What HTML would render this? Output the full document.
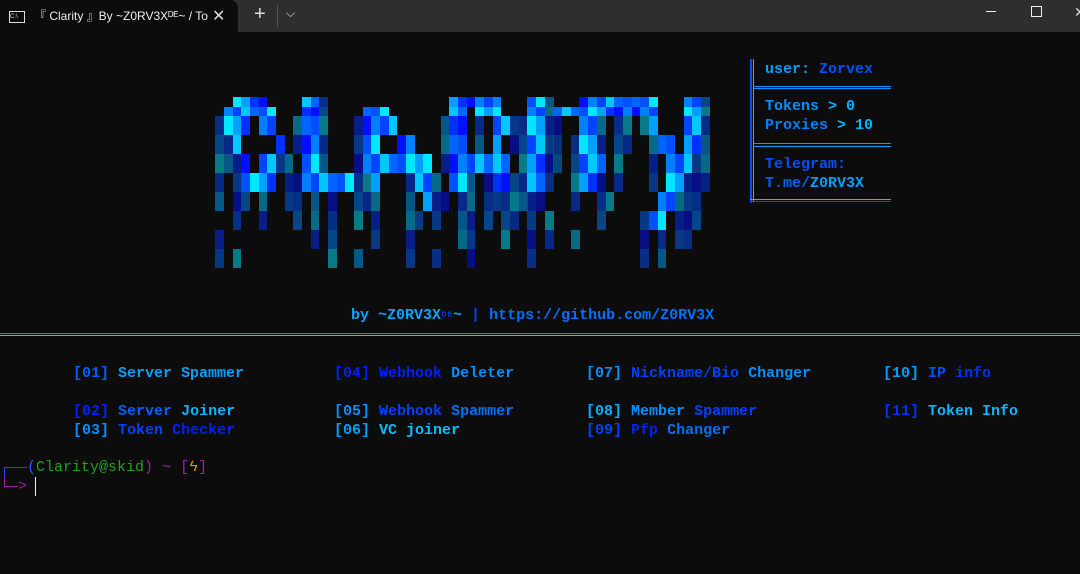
<!DOCTYPE html>
<html><head><meta charset="utf-8"><style>
body{margin:0;width:1080px;height:574px;background:#0c0c0c;overflow:hidden;font-family:"Liberation Mono",monospace;font-size:15px;font-weight:bold;position:relative}
.tb{position:absolute;left:0;top:0;width:1080px;height:32px;background:#2e2e2e}
.tab{position:absolute;left:0;top:0;width:238px;height:32px;background:#0c0c0c;border-radius:0 8px 0 0}
.t{position:absolute;white-space:pre;line-height:19px}
.c{position:absolute}
</style></head><body>
<div class="tb"><div class="tab"></div>
<div style="position:absolute;left:9px;top:11px;width:14px;height:10px;border:1px solid #ddd;font:6px 'Liberation Sans';color:#ddd;line-height:10px">C:\</div>
<div class="t" style="left:34px;top:7px;font:12px 'Liberation Sans',sans-serif;color:#eee">『 Clarity 』By ~Z0RV3Xᴰᴱ~ / To</div>
<div class="t" style="left:212px;top:6px;font:16px 'Liberation Sans';color:#ddd">✕</div>
<div class="t" style="left:254px;top:3px;font:20px 'Liberation Sans';color:#ddd;font-weight:normal">+</div>
<div style="position:absolute;left:277px;top:5px;width:1px;height:22px;background:#555"></div>
<div class="t" style="left:286px;top:6px;font:12px 'Liberation Sans';color:#ddd">⌵</div>
<div style="position:absolute;left:986px;top:11px;width:10px;height:1px;background:#eee"></div>
<div style="position:absolute;left:1031px;top:6px;width:9px;height:9px;border:1px solid #eee"></div>
<div class="t" style="left:1074px;top:4px;font:14px 'Liberation Sans';color:#ddd">✕</div>
</div>
<div id="logo"></div>
<div style="position:absolute;left:750px;top:59px;width:2px;height:144px;background:#0050ff"></div>
<div style="position:absolute;left:753px;top:59px;width:1px;height:142px;background:#00c8ff"></div>
<div style="position:absolute;left:753px;top:86px;width:138px;height:1px;background:#0090ff"></div>
<div style="position:absolute;left:753px;top:88px;width:138px;height:1px;background:#0090ff"></div>
<div style="position:absolute;left:753px;top:143px;width:138px;height:1px;background:#00a0ff"></div>
<div style="position:absolute;left:753px;top:146px;width:138px;height:1px;background:#00a0ff"></div>
<div style="position:absolute;left:750px;top:199px;width:141px;height:1px;background:#00c8ff"></div>
<div style="position:absolute;left:750px;top:201px;width:141px;height:1px;background:#0050ff"></div>
<div class="t" style="left:765px;top:60px"><span style="color:#00a0ff">user: </span><span style="color:#0050ff">Zorvex</span></div>
<div class="t" style="left:765px;top:97px;color:#0090ff">Tokens <span style="color:#00b0ff">&gt; 0</span></div>
<div class="t" style="left:765px;top:116px;color:#0080ff">Proxies <span style="color:#00b8ff">&gt; 10</span></div>
<div class="t" style="left:765px;top:155px;color:#0050ff">Telegram:</div>
<div class="t" style="left:765px;top:174px;color:#0060ff">T.me/<span style="color:#00a0ff">Z0RV3X</span></div>
<div class="t" style="left:351px;top:306px;color:#00a8ff">by ~Z0RV3X<span style="color:#0040ff;font-size:10px">ᴰᴱ</span>~ <span style="color:#0040ff">|</span> <span style="color:#0070ff">https://github.com/Z0RV3X</span></div>
<div style="position:absolute;left:0;top:333px;width:1080px;height:1px;background:#2080ff"></div>
<div style="position:absolute;left:0;top:335px;width:1080px;height:1px;background:#40c0ff"></div>
<div class="t" style="left:73px;top:364px"><span style="color:#0060ff">[01]</span> <span style="color:#00a0ff">Server Spammer</span></div>
<div class="t" style="left:73px;top:402px"><span style="color:#0020ff">[02]</span> <span style="color:#0060ff">Server</span> <span style="color:#00b8ff">Joiner</span></div>
<div class="t" style="left:73px;top:421px"><span style="color:#0090ff">[03]</span> <span style="color:#0040ff">Token</span> <span style="color:#0020ff">Checker</span></div>
<div class="t" style="left:334px;top:364px"><span style="color:#0020ff">[04]</span> <span style="color:#0020ff">Webhook</span> <span style="color:#0090ff">Deleter</span></div>
<div class="t" style="left:334px;top:402px"><span style="color:#0090ff">[05]</span> <span style="color:#0040ff">Webhook</span> <span style="color:#0070ff">Spammer</span></div>
<div class="t" style="left:334px;top:421px"><span style="color:#00a0ff">[06]</span> <span style="color:#00c0ff">VC joiner</span></div>
<div class="t" style="left:586px;top:364px"><span style="color:#0090ff">[07]</span> <span style="color:#0040ff">Nickname/Bio</span> <span style="color:#0090ff">Changer</span></div>
<div class="t" style="left:586px;top:402px"><span style="color:#00b0ff">[08]</span> <span style="color:#0090ff">Member</span> <span style="color:#0040ff">Spammer</span></div>
<div class="t" style="left:586px;top:421px"><span style="color:#0040ff">[09]</span> <span style="color:#0020ff">Pfp</span> <span style="color:#0070ff">Changer</span></div>
<div class="t" style="left:883px;top:364px"><span style="color:#00a0ff">[10]</span> <span style="color:#0050ff">IP</span> <span style="color:#0030ff">info</span></div>
<div class="t" style="left:883px;top:402px"><span style="color:#0030ff">[11]</span> <span style="color:#00b8ff">Token Info</span></div>
<div class="t" style="left:27px;top:458px;font-weight:normal"><span style="color:#2060ff">(</span><span style="color:#20a020">Clarity@skid</span><span style="color:#a020a0">)</span> <span style="color:#a020a0">~</span> <span style="color:#a020a0">[</span><span style="color:#d0a000">ϟ</span><span style="color:#a020a0">]</span></div>
<div style="position:absolute;left:4px;top:467px;width:23px;height:1px;background:#2040ff"></div>
<div style="position:absolute;left:4px;top:467px;width:1px;height:19px;background:#2040ff"></div>
<div style="position:absolute;left:4px;top:477px;width:1px;height:10px;background:#a020a0"></div>
<div style="position:absolute;left:4px;top:486px;width:14px;height:1px;background:#a020a0"></div>
<div class="t" style="left:18px;top:477px;color:#a020a0;font-weight:normal">&gt;</div>
<div style="position:absolute;left:35px;top:477px;width:1px;height:19px;background:#eee"></div>
<script>
var R=[
"S2-5 S10-11 D12 S27-32 S36-37 D38 S42-50 S54-55 D56",
"S1-6 S10-11 D12 S17-19 S27-28 S30-32 S36-37 D38 S39-50 S54-55 D56",
"D0 S1-3 S5-6 D9 S10-11 D12 D16 S17-20 D26 S27-28 D30 S32-33 D34-35 S36-37 D38-39 S42-43 D44 D46-47 D49 S50 S54-55 D56",
"D0-1 S2 S7 D9 S10-11 D12 D16 S17-18 S21-22 D26 S27-28 D30 S32 D34-35 S36-37 D38-39 D41 S42-43 D44 D46-47 D50 S51-52 S54-55 D56",
"D0-2 S3 S5-6 D7-8 S10-11 D12 D16 S17-24 D26 S27-33 D35 S36-37 D38-39 D41 S42-44 D46 D50 S52-54 D55-56",
"D0 D2 S3-6 D8-9 S10-15 D16-17 S18 D22 S23-24 D25 S27-28 D29 D31 S32-33 D34-35 S36-37 D38 D41 S42-43 D44 D46 D50 S52-53 D54-56",
"D0 D2-3 D5 D8-9 D11 D13 D16-18 D22 S24 D25-26 D28-29 D31-37 D41 D44-45 S51-52 D53-55",
"D2 D5 D9 D11 D13 D16 D18 D22-23 D25 D28-29 D31 D33-34 D36 D38 D44 D49 S50-51 D53-55",
"D0 D11 D13 D18 D22 D28-29 D33 D36 D38 D41 D49 D51 D53-54",
"D0 D2 D13 D16 D22 D25 D29 D36 D49 D51"];
var pal=["#0064ff","#0044ff","#0010ff","#00a0ff","#0050ff","#00c8ff","#0080ff","#0030ff","#00e8ff"];
var h="",ys=[97,107,116,135,154,173,192,211,230,249],hs=[10,9,19,19,19,19,19,19,19,19];
for(var r=0;r<R.length;r++){R[r].split(" ").forEach(function(tk){var t=tk[0],p=tk.slice(1).split("-"),a=+p[0],b=p.length>1?+p[1]:a;
for(var c=a;c<=b;c++){var col=pal[(c*4+r*2+(c>>3))%pal.length];var x=(215.3+c*8.67).toFixed(1);
h+='<div class="c" style="left:'+x+'px;top:'+ys[r]+'px;width:8.8px;height:'+hs[r]+'px;background:'+col+(t=="S"?'':';opacity:.5')+'"></div>';}});}
document.getElementById("logo").innerHTML=h;
</script>
</body></html>
